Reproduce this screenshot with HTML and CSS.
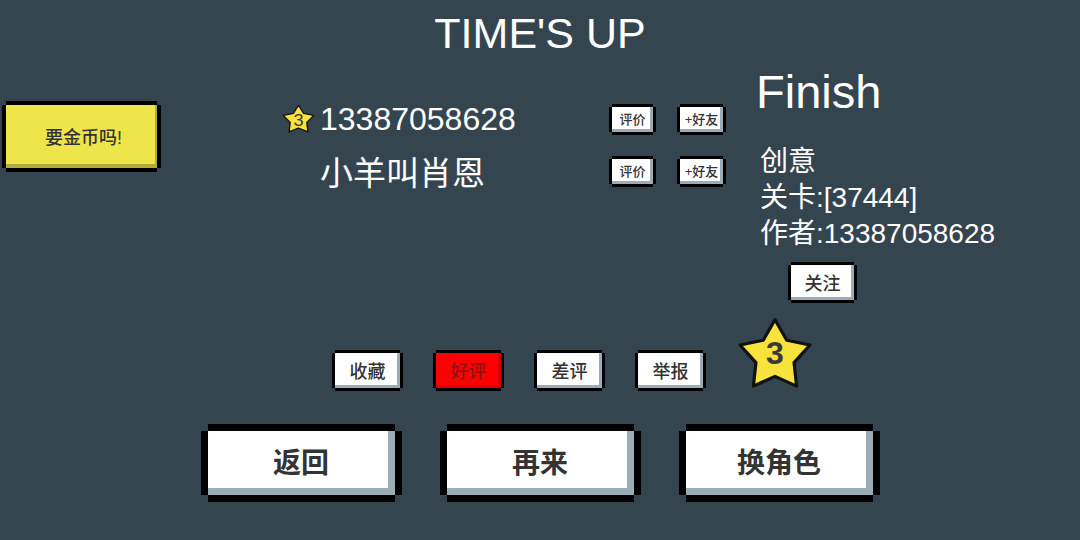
FILE: index.html
```html
<!DOCTYPE html>
<html lang="zh">
<head>
  <meta charset="UTF-8" />
  <meta name="viewport" content="width=device-width, initial-scale=1.0" />
  <title>TIME'S UP</title>
  <link rel="stylesheet" href="styles.css">
</head>
<body>
  <div class="screen">
    <h1 class="title">TIME'S UP</h1>

    <div class="main">
      <div class="side-left">
        <button class="btn btn-yellow coin-btn">要金币吗!</button>
      </div>

      <div class="players">
        <div class="player-row">
          <span class="badge">
            <svg class="star-small" viewBox="0 0 100 100" preserveAspectRatio="none">
              <polygon points="50,7 64.7,32.8 93.7,38.8 73.8,60.7 77,90.2 50,78 23,90.2 26.2,60.7 6.3,38.8 35.3,32.8" />
              <text x="50" y="72" class="star-num">3</text>
            </svg>
          </span>
          <span class="player-name">13387058628</span>
          <button class="btn btn-tiny">评价</button>
          <button class="btn btn-tiny btn-add">+好友</button>
        </div>
        <div class="player-row">
          <span class="badge"></span>
          <span class="player-name cn">小羊叫肖恩</span>
          <button class="btn btn-tiny">评价</button>
          <button class="btn btn-tiny btn-add">+好友</button>
        </div>
      </div>

      <div class="level-info">
        <div class="finish">Finish</div>
        <div class="info-lines">
          <div>创意</div>
          <div>关卡:[37444]</div>
          <div>作者:13387058628</div>
        </div>
        <button class="btn btn-small follow-btn">关注</button>
      </div>
    </div>

    <div class="actions">
      <button class="btn btn-small">收藏</button>
      <button class="btn btn-small btn-red">好评</button>
      <button class="btn btn-small">差评</button>
      <button class="btn btn-small">举报</button>
      <svg class="star-big" viewBox="0 0 100 100">
        <polygon points="50,7 64.7,32.8 93.7,38.8 73.8,60.7 77,90.2 50,78 23,90.2 26.2,60.7 6.3,38.8 35.3,32.8" />
        <text x="50" y="63" class="star-num">3</text>
      </svg>
    </div>

    <div class="bottom-bar">
      <button class="btn btn-big">返回</button>
      <button class="btn btn-big">再来</button>
      <button class="btn btn-big">换角色</button>
    </div>
  </div>
</body>
</html>
```

FILE: styles.css
```css
* {
  margin: 0;
  padding: 0;
  box-sizing: border-box;
}

body {
  background: #35454f;
  color: #fff;
  font-family: 'Liberation Sans', 'Noto Sans CJK SC', sans-serif;
  width: 1080px;
  height: 540px;
  overflow: hidden;
}

.screen {
  display: flex;
  flex-direction: column;
  height: 540px;
}

.title {
  height: 66px;
  line-height: 66px;
  font-size: 43px;
  font-weight: normal;
  text-align: center;
}

/* pixel style buttons: black notched frame + shaded bottom/right edge */
.btn {
  border: none;
  background: #fff;
  color: #333;
  font-family: inherit;
  font-weight: 500;
  display: flex;
  align-items: center;
  justify-content: center;
  flex: none;
  padding-bottom: 2px;
  box-shadow: 0 -3px 0 #000, 0 3px 0 #000, -3px 0 0 #000, 3px 0 0 #000,
    inset -3px -3px 0 #9aacb6;
}

.btn-tiny {
  width: 41px;
  height: 25px;
  font-size: 13px;
}

.btn-tiny.btn-add {
  width: 43px;
  margin-left: 27px;
}

.btn-small {
  width: 65px;
  height: 35px;
  font-size: 18px;
}

.btn-red {
  background: #ff0000;
  color: #8e1212;
  box-shadow: 0 -3px 0 #000, 0 3px 0 #000, -3px 0 0 #000, 3px 0 0 #000,
    inset -3px -3px 0 #d80000;
}

.btn-yellow {
  background: #ede54a;
  box-shadow: 0 -4px 0 #000, 0 4px 0 #000, -4px 0 0 #000, 4px 0 0 #000,
    inset -2px -4px 0 #b3ab38;
}

.btn-big {
  width: 187px;
  height: 64px;
  font-size: 28px;
  font-weight: bold;
  padding-bottom: 5px;
  box-shadow: 0 -7px 0 #000, 0 7px 0 #000, -7px 0 0 #000, 7px 0 0 #000,
    inset -7px -7px 0 #9aacb6;
}

.main {
  display: flex;
  align-items: flex-start;
  height: 248px;
}

.side-left {
  width: 281px;
  flex: none;
  padding: 39px 0 0 6px;
}

.coin-btn {
  width: 151px;
  height: 63px;
  font-size: 18px;
  padding-left: 4px;
}

.players {
  width: 477px;
  flex: none;
  padding-top: 27px;
}

.player-row {
  display: flex;
  align-items: center;
  height: 52px;
}

.badge {
  width: 39px;
  flex: none;
  display: flex;
  align-items: center;
}

.star-small {
  width: 35px;
  height: 32px;
}

.star-small polygon,
.star-big polygon {
  fill: #f7e33b;
  stroke: #111;
  stroke-width: 4;
  stroke-linejoin: round;
}

.star-num {
  fill: #3a3a3a;
  font-family: 'Liberation Sans', sans-serif;
  font-weight: bold;
  text-anchor: middle;
}

.star-small .star-num {
  font-size: 52px;
  font-weight: normal;
}

.star-big .star-num {
  font-size: 40px;
}

.player-name {
  width: 292px;
  flex: none;
  font-size: 32px;
  white-space: nowrap;
}

.player-name.cn {
  font-size: 33px;
}

.level-info {
  flex: 1;
}

.finish {
  font-size: 47px;
  line-height: 52px;
  margin-left: -2px;
}

.info-lines {
  margin-top: 26px;
  font-size: 28px;
  line-height: 36px;
  margin-left: 2px;
}

.follow-btn {
  width: 63px;
  margin: 13px 0 0 33px;
}

.actions {
  display: flex;
  align-items: flex-end;
  gap: 36px;
  height: 74px;
  padding-left: 335px;
}

.star-big {
  width: 80px;
  height: 80px;
  flex: none;
  margin: 0 0 -6px -4px;
}

.bottom-bar {
  display: flex;
  justify-content: center;
  gap: 52px;
  margin-top: 43px;
}
```
